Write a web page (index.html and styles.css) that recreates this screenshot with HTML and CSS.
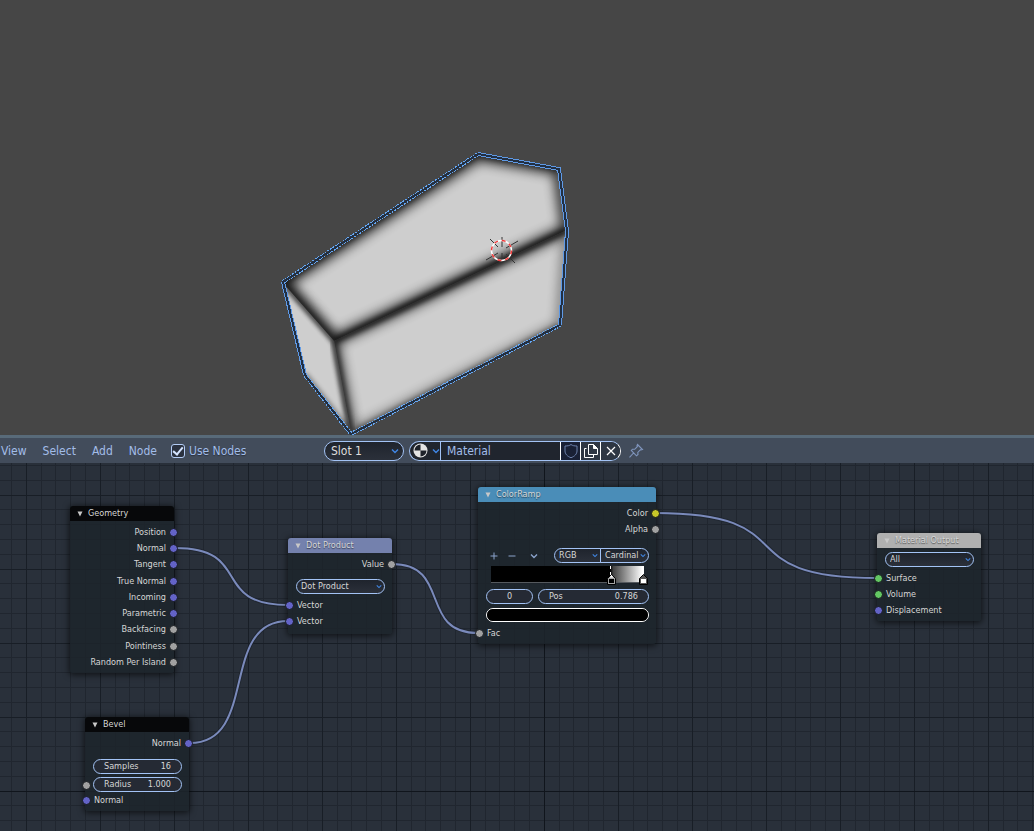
FILE: index.html
```html
<!DOCTYPE html>
<html lang="en">
<head>
<meta charset="utf-8">
<title>Shader Editor</title>
<link rel="stylesheet" href="styles.css">
</head>
<body>
<svg class="defs" aria-hidden="true">
  <symbol id="chevron" viewBox="0 0 8 6"><path d="M1 1.5 4 4.5 7 1.5" fill="none" stroke="currentColor" stroke-width="1.4"/></symbol>
  <symbol id="collapse" viewBox="0 0 6 6"><path d="M.5 .5H5.5L3 5.5Z" fill="currentColor"/></symbol>
</svg>

<main class="viewport">
  <svg class="scene" viewBox="0 0 1034 435" role="img" aria-label="Beveled mesh preview">
    <defs>
      <filter id="soft" x="-20%" y="-20%" width="140%" height="140%"><feGaussianBlur stdDeviation="6"/></filter>
      <filter id="tight" x="-20%" y="-20%" width="140%" height="140%"><feGaussianBlur stdDeviation="2.6"/></filter>
      <clipPath id="body"><path d="M478 155 559 169 567 231 560 325 351 433 305 374 283 283Z"/></clipPath>
      <clipPath id="top"><path d="M478 155 559 169 567 230 334 341 283 283Z"/></clipPath>
      <clipPath id="front"><path d="M334 341 567 230 560 325 351 433Z"/></clipPath>
      <clipPath id="side"><path d="M283 283 334 341 351 433 305 374Z"/></clipPath>
    </defs>
    <g clip-path="url(#body)">
      <path d="M478 155 559 169 567 231 560 325 351 433 305 374 283 283Z" fill="#cecece"/>
      <g clip-path="url(#top)" fill="none" stroke="#000">
        <path d="M283 283 478 155 559 169 567 230 334 341Z" stroke-width="12" opacity=".8" filter="url(#soft)"/>
        <path d="M283 283 478 155 559 169" stroke-width="4" opacity=".7" filter="url(#tight)"/>
        <path d="M283 283 334 341" stroke-width="8" opacity=".5" filter="url(#soft)"/>
      </g>
      <g clip-path="url(#front)" fill="none" stroke="#000">
        <path d="M567 230 334 341 351 433" stroke-width="9" opacity=".8" filter="url(#soft)"/>
        <path d="M351 433 560 325 567 230" stroke-width="5" opacity=".7" filter="url(#soft)"/>
        <path d="M351 433 560 325" stroke-width="3" opacity=".7" filter="url(#tight)"/>
      </g>
      <g clip-path="url(#side)" fill="none" stroke="#000">
        <path d="M283 283 334 341 351 433 305 374" stroke-width="3" opacity=".6" filter="url(#tight)"/>
      </g>
      <path d="M334 341 567 230" fill="none" stroke="#000" stroke-width="6" opacity=".75" filter="url(#tight)"/>
      <path d="M283 283 334 341" fill="none" stroke="#000" stroke-width="3" opacity=".8" filter="url(#tight)"/>
      <path d="M334 341 351 433" fill="none" stroke="#000" stroke-width="5" opacity=".7" filter="url(#tight)"/>
    </g>
    <g fill="none" shape-rendering="crispEdges">
      <path d="M283 282 478 154 M305 375 351 434 560 325" stroke="#66a8f4" stroke-width="4" stroke-dasharray="2 1"/>
      <path d="M478 154 559 169 567 231 560 325 M305 375 283 282" stroke="#5f9ae6" stroke-width="4"/>
      <path d="M478 154 559 169 567 231 560 325 351 434 305 375 283 282Z" stroke="#222f42" stroke-width="2"/>
    </g>
    <g fill="none">
      <path d="M502 237v10M502 253v10M490 239l8 8M518 241l-12 7M486 260l12-7M506 254l9 9" stroke="#333" stroke-width="1"/>
      <circle cx="501.500" cy="250.500" r="10" stroke="#fff" stroke-width="1.500"/>
      <circle cx="501.500" cy="250.500" r="10" stroke="#f23b3b" stroke-width="1.500" stroke-dasharray="3.900 3.950"/>
    </g>
  </svg>
</main>

<header class="toolbar">
  <nav class="menus">
    <button type="button">View</button>
    <button type="button">Select</button>
    <button type="button">Add</button>
    <button type="button">Node</button>
    <label class="check"><input type="checkbox" checked><span>Use Nodes</span></label>
  </nav>
  <div class="picker slot">
    <select aria-label="Material slot"><option>Slot 1</option></select>
    <svg class="chev"><use href="#chevron"/></svg>
  </div>
  <div class="datablock">
    <button type="button" class="browse" aria-label="Browse material">
      <svg width="15" height="15" viewBox="0 0 15 15"><circle cx="7.500" cy="7.500" r="7" fill="#e4e4e4"/><path d="M7.500 1.500A6 6 0 0 0 1.500 7.500H7.500ZM7.500 7.500H13.500A6 6 0 0 1 7.500 13.500Z" fill="#1d2129"/></svg>
      <svg class="chev"><use href="#chevron"/></svg>
    </button>
    <input type="text" value="Material" aria-label="Material name">
    <button type="button" class="fake" aria-label="Fake user"><svg width="16" height="16" viewBox="0 0 16 16"><path d="M8 1.500C6.500 2.700 4.500 3 2 3V8C2 11 4.500 13.500 8 14.700 11.500 13.500 14 11 14 8V3C11.500 3 9.500 2.700 8 1.500Z" fill="none" stroke="#6d81ac"/></svg></button>
    <button type="button" aria-label="New material"><svg width="16" height="16" viewBox="0 0 16 16"><path d="M5.500 1.500H10.500L14.500 5.500V11.500H5.500ZM10.500 1.500V5.500H14.500M3.500 5.500H1.500V14.500H10.500V12" fill="none" stroke="#fff"/><path d="M10.500 1.500V5.500H14.500Z" fill="#fff"/></svg></button>
    <button type="button" aria-label="Unlink material"><svg width="10" height="10" viewBox="0 0 10 10"><path d="M1 1 9 9M9 1 1 9" stroke="#fff" stroke-width="1.200"/></svg></button>
  </div>
  <button type="button" class="pin" aria-label="Pin"><svg width="16" height="16" viewBox="0 0 16 16"><path d="M9.500 1.500 14.500 6.500 13 7 12.500 6.700 9.800 9.400 10 11.500 8.500 12.800 3.300 7.500 4.500 6.200 6.700 6.300 9.400 3.500 9 2.500ZM5.500 10 1.500 14.300" fill="none" stroke="#7f95bd" stroke-width="1.100"/></svg></button>
</header>

<section class="canvas" aria-label="Node editor">
  <svg class="links" aria-hidden="true">
    <defs>
      <g id="wires">
        <path d="M175 85C254 85 209 142 288 142"/>
        <path d="M190 280C259 280 219 158 288 158"/>
        <path d="M392 101C452 101 418 170 478 170"/>
        <path d="M655 50C810 50 722 115 877 115"/>
      </g>
    </defs>
    <use href="#wires" fill="none" stroke="#1b212b" stroke-width="4" opacity=".6"/>
    <use href="#wires" fill="none" stroke="#7a8abb" stroke-width="2"/>
  </svg>

  <article class="node geometry">
    <h2><svg class="tri"><use href="#collapse"/></svg>Geometry</h2>
    <ul class="rows">
      <li class="out vector">Position</li>
      <li class="out vector">Normal</li>
      <li class="out vector">Tangent</li>
      <li class="out vector">True Normal</li>
      <li class="out vector">Incoming</li>
      <li class="out vector">Parametric</li>
      <li class="out value">Backfacing</li>
      <li class="out value">Pointiness</li>
      <li class="out value">Random Per Island</li>
    </ul>
  </article>

  <article class="node bevel">
    <h2><svg class="tri"><use href="#collapse"/></svg>Bevel</h2>
    <div class="out vector">Normal</div>
    <div class="fields">
      <label class="field">Samples<input type="text" value="16"></label>
      <div class="in value bare"><label class="field">Radius<input type="text" value="1.000"></label></div>
    </div>
    <div class="in vector">Normal</div>
  </article>

  <article class="node dot">
    <h2><svg class="tri"><use href="#collapse"/></svg>Dot Product</h2>
    <div class="out value">Value</div>
    <div class="picker"><select aria-label="Operation"><option>Dot Product</option></select><svg class="chev"><use href="#chevron"/></svg></div>
    <div class="in vector">Vector</div>
    <div class="in vector">Vector</div>
  </article>

  <article class="node ramp">
    <h2><svg class="tri"><use href="#collapse"/></svg>ColorRamp</h2>
    <div class="out color">Color</div>
    <div class="out value">Alpha</div>
    <div class="tools">
      <button type="button" aria-label="Add stop"><svg width="8" height="8" viewBox="0 0 8 8"><path d="M4 .5V7.500M.5 4H7.500" stroke="currentColor"/></svg></button>
      <button type="button" aria-label="Remove stop"><svg width="8" height="8" viewBox="0 0 8 8"><path d="M.5 4H7.500" stroke="currentColor"/></svg></button>
      <button type="button" class="more" aria-label="Ramp tools"><svg width="8" height="6"><use href="#chevron"/></svg></button>
      <div class="modes">
        <div class="picker"><select aria-label="Color mode"><option>RGB</option></select><svg class="chev"><use href="#chevron"/></svg></div>
        <div class="picker"><select aria-label="Interpolation"><option>Cardinal</option></select><svg class="chev"><use href="#chevron"/></svg></div>
      </div>
    </div>
    <div class="gradient">
      <svg class="stop first" width="9" height="11" viewBox="0 0 9 11"><path d="M4.500 .5 8.500 4.500V10.500H.5V4.500Z" fill="#a5a5a5" stroke="#000"/><path d="M4.500 1 6.500 3.500H2.500Z" fill="#fff"/><rect x="2" y="5" width="5" height="4" fill="#000"/></svg>
      <svg class="stop last" width="9" height="11" viewBox="0 0 9 11"><path d="M4.500 .5 8.500 4.500V10.500H.5V4.500Z" fill="#555" stroke="#000"/><rect x="2" y="5" width="5" height="4" fill="#fff"/></svg>
    </div>
    <div class="stops">
      <input class="field index" type="text" value="0" aria-label="Active stop">
      <label class="field">Pos<input type="text" value="0.786"></label>
    </div>
    <input class="swatch" type="color" value="#000000" aria-label="Stop color">
    <div class="in value">Fac</div>
  </article>

  <article class="node output">
    <h2><svg class="tri"><use href="#collapse"/></svg>Material Output</h2>
    <div class="picker"><select aria-label="Target"><option>All</option></select><svg class="chev"><use href="#chevron"/></svg></div>
    <div class="in shader">Surface</div>
    <div class="in shader">Volume</div>
    <div class="in vector">Displacement</div>
  </article>
</section>
</body>
</html>
```

FILE: styles.css
```css
* { box-sizing: border-box; }

html, body { height: 100%; }

body {
  margin: 0;
  display: flex;
  flex-direction: column;
  overflow: hidden;
  background: #464646;
  color: #d6d6d6;
  font-family: "DejaVu Sans Condensed", "DejaVu Sans", sans-serif;
  font-size: 12px;
}

button, input, select {
  margin: 0;
  padding: 0;
  border: 0;
  border-radius: 0;
  background: none;
  color: inherit;
  font: inherit;
  appearance: none;
  outline: 0;
}

svg { display: block; }
.defs { display: none; }

.viewport {
  flex: 435 1 0;
  min-height: 0;
  background: #464646;
}
.scene { width: 100%; height: 100%; }

/* Toolbar */
.toolbar {
  display: flex;
  align-items: center;
  height: 28px;
  flex: none;
  border-top: 3px solid #586a79;
  background: #424c5b;
  color: #a2bde9;
}
.menus {
  display: flex;
  align-items: center;
  gap: 16px;
  width: 324px;
  padding-left: 1px;
  text-shadow: 0 1px 1px #2b3240;
}
.check { display: flex; align-items: center; gap: 4px; margin-left: -2px; }
.check input {
  display: grid;
  place-items: center;
  width: 14px;
  height: 14px;
  border: 1px solid #b4cdf6;
  border-radius: 3px;
  background: #2b3240;
}
.check input:checked::before {
  content: "";
  width: 4px;
  height: 8px;
  margin-bottom: 2px;
  border: solid #d4e4ff;
  border-width: 0 2px 2px 0;
  transform: rotate(40deg);
}

.picker {
  display: grid;
  grid-template-columns: 1fr 8px;
  align-items: center;
  border: 1px solid #a3c3f5;
  border-radius: 8px;
  background: linear-gradient(#1f242d, #2b303a);
}
.picker select { grid-area: 1 / 1 / 2 / 3; width: 100%; padding-left: 4px; height: 13px; line-height: 12px; padding-bottom: 1px; }
.chev { width: 8px; height: 6px; color: #4087e6; pointer-events: none; }
.picker .chev { grid-area: 1 / 2; width: 6px; height: 5px; }
.slot { grid-template-columns: 1fr 12px; width: 80px; height: 20px; border-radius: 10px; color: #dedede; }
.slot select { height: 18px; padding: 0 0 0 6px; line-height: 18px; }
.picker.slot .chev { width: 8px; height: 6px; }

.datablock {
  display: flex;
  height: 20px;
  width: 212px;
  margin-left: 5px;
  border: 1px solid #a3c3f5;
  border-right-color: #fff;
  border-radius: 10px;
  background: #20252e;
  overflow: hidden;
}
.datablock > * { display: flex; align-items: center; justify-content: center; }
.datablock .browse { width: 31px; gap: 4px; padding-left: 2px; border-right: 1px solid #a3c3f5; }
.datablock input { flex: 1; min-width: 0; padding-left: 6px; }
.datablock button:not(.browse) {
  width: 20px;
  border-left: 1px solid #fff;
  background: #2e3643;
}
.datablock .fake:not(.browse) { background: #192035; }
.pin { margin-left: 7px; }

/* Node canvas */
.canvas {
  position: relative;
  flex: 368 1 0;
  min-height: 0;
  overflow: hidden;
  font-size: 9px;
  line-height: 16px;
  background:
    linear-gradient(#10151c, #10151c) 544px 0 / 1px 100% no-repeat,
    linear-gradient(#10151c, #10151c) 0 328px / 100% 1px no-repeat,
    linear-gradient(90deg, #181e26 1px, transparent 1px) 26px 0 / 74px 74px,
    linear-gradient(#181e26 1px, transparent 1px) 0 32px / 74px 74px,
    linear-gradient(90deg, transparent 15px, #20262f 15px 16px, transparent 16px 29px, #20262f 29px 30px, transparent 30px 44px, #20262f 44px 45px, transparent 45px 59px, #20262f 59px 60px, transparent 60px) 26px 0 / 74px 74px,
    linear-gradient(transparent 14px, #20262f 14px 15px, transparent 15px 29px, #20262f 29px 30px, transparent 30px 44px, #20262f 44px 45px, transparent 45px 59px, #20262f 59px 60px, transparent 60px) 0 32px / 74px 74px,
    #29303a;
}
.links { position: absolute; inset: 0; width: 100%; height: 100%; }

.node {
  position: absolute;
  display: flex;
  flex-direction: column;
  width: 104px;
  padding-bottom: 3px;
  border-radius: 3px;
  background: rgba(29, 36, 43, .88);
  box-shadow: 0 1px 6px 1px rgba(0, 0, 0, .6);
}
.node h2 {
  display: flex;
  align-items: center;
  gap: 5px;
  height: 15px;
  margin: 0 0 3px;
  padding-left: 7px;
  border-radius: 3px 3px 0 0;
  background: #07080a;
  font-size: 9px;
  font-weight: 400;
  line-height: 15px;
  text-shadow: 0 1px 1px rgba(0, 0, 0, .5);
}
.tri { width: 6px; height: 6px; color: #c8c8c8; }

.geometry { left: 70px; top: 43px; min-height: 167px; }
.bevel { left: 85px; top: 254px; }
.dot { left: 288px; top: 75px; padding-bottom: 5px; }
.ramp { left: 478px; top: 24px; width: 178px; }
.output { left: 877px; top: 70px; }
.dot h2 { background: #7481ad; }
.ramp h2 { background: #4a8db8; }
.output h2 { background: #b0b0b0; text-shadow: 0 1px 1px #555; }

.rows { display: flex; flex: 1; flex-direction: column; margin: 0; padding: 0; list-style: none; }
.rows li { flex: 1; }

/* Socket rows */
.in, .out { position: relative; min-height: 16px; }
.in { padding-left: 9px; }
.out { padding-right: 8px; text-align: right; }
.in::before, .out::after {
  content: "";
  position: absolute;
  top: 4px;
  width: 7px;
  height: 7px;
  border: 1px solid #14181d;
  border-radius: 50%;
  background: var(--socket);
}
.in::before { left: -3px; }
.out::after { right: -4px; }
.vector { --socket: #6363c7; }
.value { --socket: #a1a1a1; }
.color { --socket: #c7c729; }
.shader { --socket: #63c763; }

/* Node controls */
.field {
  display: flex;
  align-items: center;
  justify-content: space-between;
  height: 15px;
  padding: 0 10px;
  border: 1px solid #a3c3f5;
  border-radius: 8px;
  background: #252a34;
  line-height: 13px;
}
.field input { flex: 1; width: 0; min-width: 0; height: 13px; text-align: right; }
.fields { display: grid; gap: 3px; margin: 8px 7px 0 8px; }
.bare { min-height: 15px; margin-left: -8px; padding-left: 8px; }
.node > .picker { height: 15px; margin: 0 7px 3px 8px; }
.dot > .picker { margin-top: 7px; }
.output > .picker { margin-top: 1px; }

.tools {
  display: flex;
  align-items: center;
  height: 15px;
  margin: 11px 7px 0 11px;
  color: #8ba3cc;
}
.tools button { display: grid; place-items: center; width: 9px; margin-right: 9px; }
.tools .more { margin: 0 0 0 4px; }
.modes { display: flex; width: 95px; margin-left: auto; color: #d6d6d6; }
.modes .picker:first-child { width: 47px; border-radius: 8px 0 0 8px; }
.modes .picker:last-child { flex: 1; margin-left: -1px; border-radius: 0 8px 8px 0; }

.gradient {
  position: relative;
  height: 17px;
  margin: 3px 12px 6px 13px;
  border-bottom: 1px solid #55595e;
  background: linear-gradient(90deg, #000 78%, #444 80%, #fff 99%);
}
.gradient::before {
  content: "";
  position: absolute;
  left: 78%;
  top: 0;
  height: 9px;
  border-left: 1px dashed #fff;
}
.stop { position: absolute; top: 8px; }
.first { left: 76%; }
.last { right: -4px; }

.stops { display: flex; gap: 5px; margin: 0 7px 4px 8px; }
.stops label { flex: 1; }
.index { width: 47px; padding-bottom: 1px; text-align: center; }

.swatch {
  width: auto;
  height: 14px;
  margin: 0 7px 3px 8px;
  border: 1px solid #fff;
  border-radius: 7px;
  background: #000;
}
.swatch::-webkit-color-swatch-wrapper { padding: 0; }
.swatch::-webkit-color-swatch { border: 0; border-radius: 6px; }
```
